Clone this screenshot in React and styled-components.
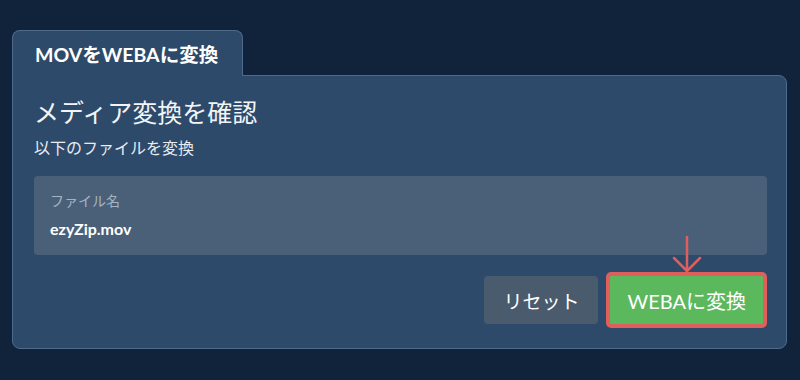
import React from 'react';
import styled, { createGlobalStyle } from 'styled-components';

const GlobalStyle = createGlobalStyle`
  html, body {
    margin: 0;
    padding: 0;
    background: #10233a;
  }
  body {
    font-family: Lato, "Noto Sans CJK JP", sans-serif;
    color: #ffffff;
  }
`;

const Page = styled.div`
  width: 800px;
  height: 380px;
  box-sizing: border-box;
  padding: 30px 13px 0 12px;
  background: #10233a;
`;

const Tab = styled.div`
  position: relative;
  z-index: 1;
  display: inline-flex;
  align-items: center;
  box-sizing: border-box;
  width: 231px;
  height: 46px;
  margin-bottom: -1px;
  padding: 0 22px;
  background: #2d4a6a;
  border: 1px solid #4e6b8c;
  border-bottom: none;
  border-radius: 8px 8px 0 0;
  font-size: 19.5px;
  font-weight: 700;
  color: #ffffff;
`;

const Panel = styled.div`
  box-sizing: border-box;
  padding: 19px 19px 20px 21px;
  background: #2d4a6a;
  border: 1px solid #4e6b8c;
  border-radius: 0 8px 8px 8px;
`;

const Title = styled.h1`
  margin: 0;
  font-size: 25px;
  line-height: 34px;
  font-weight: 400;
  color: #f2f4f7;
`;

const Subtitle = styled.p`
  margin: 8px 0 0;
  font-size: 16px;
  line-height: 22px;
  color: #e8ecf1;
`;

const FileBox = styled.div`
  box-sizing: border-box;
  height: 79px;
  margin-top: 17px;
  padding: 15px 16px 0;
  background: #4a6079;
  border-radius: 4px;
`;

const FileLabel = styled.div`
  font-size: 14px;
  line-height: 20px;
  color: #a6b3c2;
`;

const FileName = styled.div`
  margin-top: 6px;
  font-size: 16px;
  line-height: 24px;
  font-weight: 700;
  color: #ffffff;
`;

const Actions = styled.div`
  display: flex;
  justify-content: flex-end;
  align-items: center;
  gap: 8px;
  margin-top: 17px;
`;

const Button = styled.button`
  position: relative;
  box-sizing: border-box;
  height: ${(p) => (p.$highlight ? '56px' : '48px')};
  padding: 0 ${(p) => (p.$highlight ? '17px' : '19px')};
  border: ${(p) => (p.$highlight ? '4px solid #de5f5b' : 'none')};
  border-radius: ${(p) => (p.$highlight ? '5px' : '4px')};
  background: ${(p) => (p.$primary ? '#5cb85c' : '#4a5b6d')};
  color: #ffffff;
  font-family: Lato, "Noto Sans CJK JP", sans-serif;
  font-size: ${(p) => (p.$primary ? '20px' : '19px')};
  cursor: pointer;
`;

const Pointer = styled.svg`
  position: absolute;
  left: 50%;
  bottom: 100%;
  margin-left: -15px;
  margin-bottom: 3px;
  overflow: visible;
`;

export default function App() {
  return (
    <Page>
      <GlobalStyle />
      <Tab>MOVをWEBAに変換</Tab>
      <Panel>
        <Title>メディア変換を確認</Title>
        <Subtitle>以下のファイルを変換</Subtitle>
        <FileBox>
          <FileLabel>ファイル名</FileLabel>
          <FileName>ezyZip.mov</FileName>
        </FileBox>
        <Actions>
          <Button>リセット</Button>
          <Button $primary $highlight>
            <Pointer width="30" height="36" viewBox="0 0 30 36">
              <path
                d="M15 0 V34 M2 21 L15 34 L28 21"
                fill="none"
                stroke="#de5f5b"
                strokeWidth="2.5"
                strokeLinecap="round"
                strokeLinejoin="round"
              />
            </Pointer>
            WEBAに変換
          </Button>
        </Actions>
      </Panel>
    </Page>
  );
}
